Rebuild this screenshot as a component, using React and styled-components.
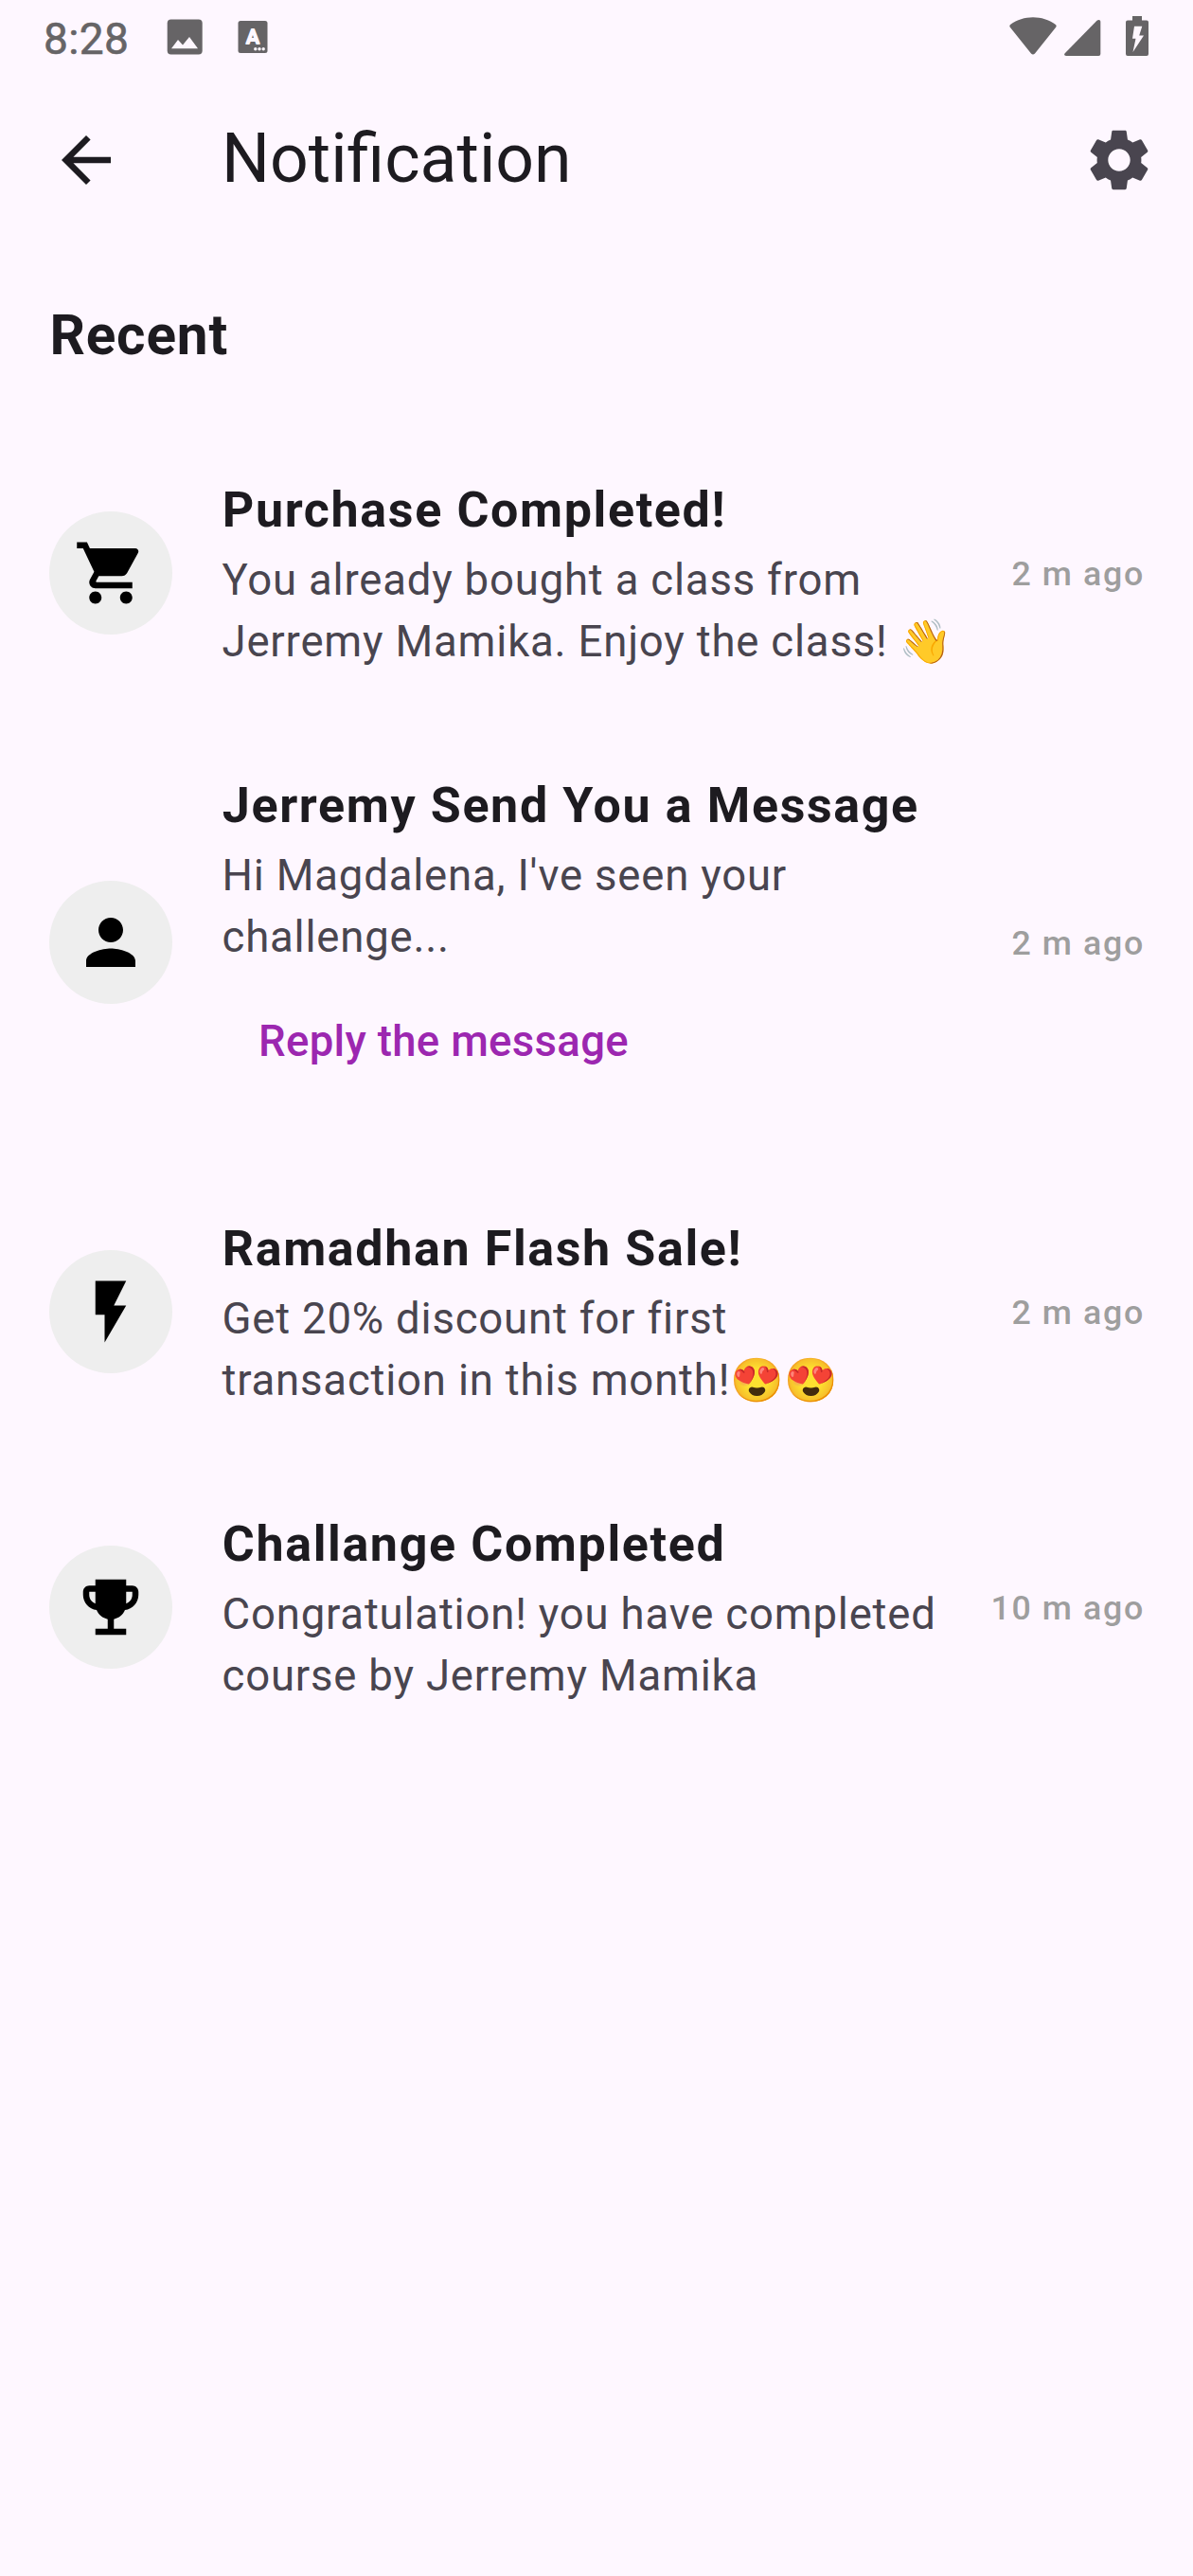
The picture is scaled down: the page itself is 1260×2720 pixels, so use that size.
import React from "react";
import styled, { createGlobalStyle } from "styled-components";

const GlobalStyle = createGlobalStyle`
  body {
    margin: 0;
    background: #fef7ff;
    font-family: Roboto, "Noto Sans", "Noto Color Emoji", sans-serif;
    color: #1d1b20;
  }
`;

const Screen = styled.div`
  display: flex;
  flex-direction: column;
  width: 1260px;
  min-height: 2720px;
  background: #fef7ff;
`;

const StatusBar = styled.div`
  display: flex;
  justify-content: space-between;
  height: 78px;
  box-sizing: border-box;
  padding: 0 47px 0 46px;
  color: #666466;
`;

const StatusGroup = styled.div`
  display: flex;
  align-items: center;
  height: 78px;
`;

const Clock = styled.span`
  width: 130px;
  font-size: 46px;
  line-height: 54px;
  letter-spacing: 0.4px;
  -webkit-text-stroke: 0.6px currentColor;
  padding-top: 3px;
`;

const StatusIcon = styled.svg`
  display: block;
  flex: none;
  margin-left: ${(p) => p.$gap || 0}px;
`;

const AppBar = styled.header`
  display: flex;
  align-items: center;
  height: 182px;
  padding: 0 39px 0 52px;
`;

const Title = styled.h1`
  flex: 1;
  margin: 0 0 3px 104px;
  font-size: 71.5px;
  line-height: 91px;
  font-weight: 400;
`;

const Glyph = styled.svg`
  display: block;
  flex: none;
  width: 78px;
  height: 78px;
  fill: ${(p) => p.$color || "#000"};
`;

const SectionTitle = styled.h2`
  margin: 0;
  height: 189px;
  box-sizing: border-box;
  padding: 58px 52px 0 52.4px;
  font-size: 58.5px;
  line-height: 72px;
  font-weight: 700;
  letter-spacing: 0.8125px;
`;

const List = styled.ul`
  margin: 0;
  padding: 0;
  list-style: none;
`;

const Item = styled.li`
  display: flex;
  align-items: center;
  box-sizing: border-box;
  height: ${(p) => (p.$tall ? 468 : 312)}px;
  padding: 0 51.2px 0 52px;
`;

const Avatar = styled.div`
  display: flex;
  align-items: center;
  justify-content: center;
  flex: none;
  width: 130px;
  height: 130px;
  margin-right: 52px;
  border-radius: 50%;
  background: #eeeeee;
`;

const Content = styled.div`
  display: flex;
  flex-direction: column;
  align-items: flex-start;
  gap: 2px;
  padding-bottom: 1px;
  flex: 1;
`;

const ItemTitle = styled.h3`
  margin: 0;
  padding-left: 0.8px;
  font-size: 52px;
  line-height: 78px;
  font-weight: 700;
  letter-spacing: 1.625px;
  white-space: nowrap;
`;

const Message = styled.p`
  margin: 0;
  padding-left: 0.5px;
  font-size: 45.5px;
  line-height: 65px;
  letter-spacing: 0.8125px;
  color: #49454f;
  white-space: nowrap;
`;

const Line = styled.span`
  display: block;
  height: 65px;
`;

const ReplyButton = styled.button`
  height: 156px;
  margin-top: -2px;
  padding: 0 39px;
  border: 0;
  background: none;
  font: 500 45.5px/65px Roboto, sans-serif;
  letter-spacing: 0.325px;
  color: #9c27b0;
`;

const Time = styled.time`
  flex: none;
  padding-top: 2px;
  font-size: 35.75px;
  line-height: 52px;
  font-weight: 500;
  letter-spacing: 1.625px;
  color: #9e9e9e;
`;

const icons = {
  back: "M20 11H7.83l5.59-5.59L12 4l-8 8 8 8 1.41-1.41L7.83 13H20v-2z",
  settings:
    "M19.14 12.94c.04-.3.06-.61.06-.94 0-.32-.02-.64-.07-.94l2.03-1.58c.18-.14.23-.41.12-.61l-1.92-3.32c-.12-.22-.37-.29-.59-.22l-2.39.96c-.5-.38-1.03-.7-1.62-.94l-.36-2.54c-.04-.24-.24-.41-.48-.41h-3.84c-.24 0-.43.17-.47.41l-.36 2.54c-.59.24-1.13.57-1.62.94l-2.39-.96c-.22-.08-.47 0-.59.22L2.74 8.87c-.12.21-.08.47.12.61l2.03 1.58c-.05.3-.09.63-.09.94s.02.64.07.94l-2.03 1.58c-.18.14-.23.41-.12.61l1.92 3.32c.12.22.37.29.59.22l2.39-.96c.5.38 1.03.7 1.62.94l.36 2.54c.05.24.24.41.48.41h3.84c.24 0 .44-.17.47-.41l.36-2.54c.59-.24 1.13-.56 1.62-.94l2.39.96c.22.08.47 0 .59-.22l1.92-3.32c.12-.22.07-.47-.12-.61l-2.01-1.58zM12 15.6c-1.98 0-3.6-1.62-3.6-3.6s1.62-3.6 3.6-3.6 3.6 1.62 3.6 3.6-1.62 3.6-3.6 3.6z",
  cart: "M7 18c-1.1 0-1.99.9-1.99 2S5.9 22 7 22s2-.9 2-2-.9-2-2-2zM1 2v2h2l3.6 7.59-1.35 2.45c-.16.28-.25.61-.25.96 0 1.1.9 2 2 2h12v-2H7.42c-.14 0-.25-.11-.25-.25l.03-.12.9-1.63h7.45c.75 0 1.41-.41 1.75-1.03l3.58-6.49c.08-.14.12-.31.12-.48 0-.55-.45-1-1-1H5.21l-.94-2H1zm16 16c-1.1 0-1.99.9-1.99 2s.89 2 1.99 2 2-.9 2-2-.9-2-2-2z",
  person:
    "M12 12c2.21 0 4-1.79 4-4s-1.79-4-4-4-4 1.79-4 4 1.79 4 4 4zm0 2c-2.67 0-8 1.34-8 4v2h16v-2c0-2.66-5.33-4-8-4z",
  flash: "M7 2v11h3v9l7-12h-4l4-8z",
  trophy:
    "M19 5h-2V3H7v2H5c-1.1 0-2 .9-2 2v1c0 2.55 1.92 4.63 4.39 4.94.63 1.5 1.98 2.63 3.61 2.96V19H7v2h10v-2h-4v-3.1c1.63-.33 2.98-1.46 3.61-2.96C19.08 12.63 21 10.55 21 8V7c0-1.1-.9-2-2-2zM5 8V7h2v3.82C5.84 10.4 5 9.3 5 8zm14 0c0 1.3-.84 2.4-2 2.82V7h2v1z",
};

const Icon = ({ name, color }) => (
  <Glyph viewBox="0 0 24 24" $color={color}>
    <path d={icons[name]} />
  </Glyph>
);

const notifications = [
  {
    icon: "cart",
    title: "Purchase Completed!",
    lines: ["You already bought a class from", "Jerremy Mamika. Enjoy the class! 👋"],
    time: "2 m ago",
  },
  {
    icon: "person",
    title: "Jerremy Send You a Message",
    lines: ["Hi Magdalena, I've seen your", "challenge..."],
    time: "2 m ago",
    action: "Reply the message",
  },
  {
    icon: "flash",
    title: "Ramadhan Flash Sale!",
    lines: ["Get 20% discount for first", "transaction in this month!😍😍"],
    time: "2 m ago",
  },
  {
    icon: "trophy",
    title: "Challange Completed",
    lines: ["Congratulation! you have completed", "course by Jerremy Mamika"],
    time: "10 m ago",
  },
];

export default function App() {
  return (
    <Screen>
      <GlobalStyle />
      <StatusBar>
        <StatusGroup>
          <Clock>8:28</Clock>
          <StatusIcon width="38" height="38" viewBox="0 0 38 38" fill="currentColor">
            <rect x="0.7" y="0.4" width="37" height="37.2" rx="4" />
            <path d="M5 31.2L12 22L17 27.6L24 19L33 31.2Z" fill="#fef7ff" />
          </StatusIcon>
          <StatusIcon $gap={37} width="32" height="38" viewBox="0 0 32 38" fill="currentColor">
            <rect x="0.5" y="2" width="31" height="34" rx="2.5" />
            <text
              x="16"
              y="26.2"
              textAnchor="middle"
              fontFamily="Roboto, sans-serif"
              fontSize="21"
              fontWeight="500"
              fill="#fef7ff"
              stroke="#fef7ff"
              strokeWidth="1.8"
              strokeLinejoin="round"
            >
              A
            </text>
            <g fill="#fef7ff">
              <circle cx="18.8" cy="31.8" r="1.7" />
              <circle cx="23" cy="31.8" r="1.7" />
              <circle cx="27.2" cy="31.8" r="1.7" />
            </g>
          </StatusIcon>
        </StatusGroup>
        <StatusGroup>
          <StatusIcon width="50" height="44" viewBox="0 0 50 44" fill="currentColor">
            <path d="M1 12Q-0.5 10 1.4 8.8C8 4 16.5 1.3 25 1.3S42 4 48.6 8.8Q50.5 10 49 12L27 39.5Q25 41.5 23 39.5Z" />
          </StatusIcon>
          <StatusIcon $gap={8} width="39" height="44" viewBox="0 0 39 44" fill="currentColor">
            <path d="M0.7 39.3L34.5 4.8Q36 3.5 37.5 4.2Q38.3 4.7 38.3 6V40Q38.3 42 36.3 42H2Q-1 41.5 0.7 39.3Z" />
          </StatusIcon>
          <StatusIcon $gap={26} width="24" height="44" viewBox="0 0 24 44" fill="currentColor">
            <path d="M7 0H17V4.5H22Q24 4.5 24 6.5V40Q24 42 22 42H2Q0 42 0 40V6.5Q0 4.5 2 4.5H7Z" />
            <path d="M9 10.7H17.3L14.2 20.5H19L7.5 38L10.5 23.7H7Z" fill="#fef7ff" />
          </StatusIcon>
        </StatusGroup>
      </StatusBar>
      <AppBar>
        <Icon name="back" color="#1d1b20" />
        <Title>Notification</Title>
        <Icon name="settings" color="#49454f" />
      </AppBar>
      <SectionTitle>Recent</SectionTitle>
      <List>
        {notifications.map((n) => (
          <Item key={n.title} $tall={Boolean(n.action)}>
            <Avatar>
              <Icon name={n.icon} />
            </Avatar>
            <Content>
              <ItemTitle>{n.title}</ItemTitle>
              <Message>
                {n.lines.map((line) => (
                  <Line key={line}>{line}</Line>
                ))}
              </Message>
              {n.action && <ReplyButton>{n.action}</ReplyButton>}
            </Content>
            <Time>{n.time}</Time>
          </Item>
        ))}
      </List>
    </Screen>
  );
}
